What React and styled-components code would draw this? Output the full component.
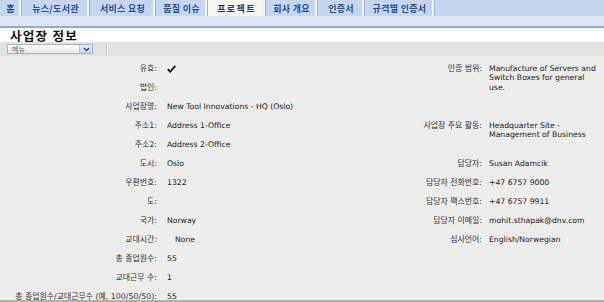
import React from "react";
import styled, { createGlobalStyle } from "styled-components";

const Global = createGlobalStyle`
  html, body { margin: 0; padding: 0; background: #ffffff; }
  body { width: 604px; height: 302px; overflow: hidden; font-family: "DejaVu Sans", "Noto Sans CJK KR", sans-serif; }
`;

const Page = styled.div`
  width: 604px;
  height: 302px;
  display: flex;
  flex-direction: column;
  overflow: hidden;
`;

const TabBar = styled.div`
  height: 16px;
  display: flex;
  background: #c6d6ef;
`;

const Tab = styled.div`
  display: flex;
  align-items: center;
  justify-content: center;
  width: ${(p) => p.$w}px;
  box-sizing: border-box;
  font-family: "Noto Sans CJK KR", sans-serif;
  font-weight: 700;
  font-size: 9px;
  letter-spacing: ${(p) => (p.$active ? "1.4px" : "0.3px")};
  color: ${(p) => (p.$active ? "#26375f" : "#2b4f93")};
  background: ${(p) => (p.$active ? "#f7f6f0" : "transparent")};
  border-right: 1px solid #9fb3d5;
  box-shadow: inset -2px 0 0 #eef3fb;
  white-space: nowrap;
`;

const SubBar = styled.div`
  height: 10px;
  background: #dbe5f4;
  border-bottom: 2px solid #94a9cc;
`;

const Title = styled.h1`
  margin: 0;
  height: 14px;
  padding: 0 0 0 10px;
  display: flex;
  align-items: center;
  font-family: "Noto Sans CJK KR", sans-serif;
  font-weight: 700;
  font-size: 12.5px;
  letter-spacing: 1.3px;
  color: #111;
`;

const Toolbar = styled.div`
  height: 14px;
  display: flex;
  align-items: center;
  padding-left: 7px;
  gap: 13px;
  background: #e3e3de;
`;

const Select = styled.div`
  width: 86px;
  height: 10px;
  box-sizing: border-box;
  display: flex;
  align-items: stretch;
  border: 1px solid #a8b4c8;
  background: linear-gradient(#fbfbfb, #e9e9e9);
`;

const SelectText = styled.span`
  flex: 1;
  font-family: "Noto Sans CJK KR", sans-serif;
  font-size: 7px;
  line-height: 8px;
  padding-left: 4px;
  color: #666;
`;

const SelectButton = styled.span`
  width: 12px;
  display: flex;
  align-items: center;
  justify-content: center;
  background: linear-gradient(#e4edfb, #c3d4f0);
  border-left: 1px solid #b6c5df;
`;

const Separator = styled.span`
  width: 1px;
  height: 12px;
  background: #c8c8c2;
  box-shadow: 1px 0 0 #f6f6f3;
`;

const Content = styled.div`
  height: 241px;
  box-sizing: content-box;
  padding-top: 3px;
  background: #ececea;
  border-bottom: 2px solid #b3b3a5;
  display: flex;
  overflow: hidden;
`;

const Column = styled.div`
  width: ${(p) => p.$w}px;
  display: flex;
  flex-direction: column;
  flex: none;
`;

const Row = styled.div`
  height: ${(p) => 19 * (p.$span || 1)}px;
  display: grid;
  grid-template-columns: ${(p) => p.$label}px 1fr;
  column-gap: ${(p) => p.$gap}px;
  flex: none;
`;

const Label = styled.div`
  display: flex;
  justify-content: flex-end;
  white-space: nowrap;
  padding-top: 4.5px;
  line-height: 10px;
  font-family: "DejaVu Sans", "Noto Sans CJK KR", sans-serif;
  font-size: 7.9px;
  color: #333;
`;

const Value = styled.div`
  padding-top: 4.5px;
  padding-left: ${(p) => p.$indent || 0}px;
  padding-right: 4px;
  line-height: 9.6px;
  font-family: "DejaVu Sans", sans-serif;
  font-size: 7.7px;
  color: #222;
`;

const Check = () => (
  <svg width="9" height="8" viewBox="0 0 9 8" style={{ display: "block", marginTop: 1 }}>
    <path d="M0.8 4.2 L3.2 6.8 L8.3 0.9" fill="none" stroke="#111" strokeWidth="1.7" />
  </svg>
);

const Chevron = () => (
  <svg width="7" height="5" viewBox="0 0 7 5">
    <path d="M1 1 L3.5 3.5 L6 1" fill="none" stroke="#27468a" strokeWidth="1.4" />
  </svg>
);

const tabs = [
  ["홈", 22],
  ["뉴스/도서관", 68],
  ["서비스 요청", 66],
  ["품질 이슈", 52],
  ["프로젝트", 58, true],
  ["회사 개요", 52],
  ["인증서", 47],
  ["규격별 인증서", 70],
];

const left = [
  ["유효:", <Check key="c" />],
  ["법인:", ""],
  ["사업장명:", "New Tool Innovations - HQ (Oslo)"],
  ["주소1:", "Address 1-Office"],
  ["주소2:", "Address 2-Office"],
  ["도시:", "Oslo"],
  ["우편번호:", "1322"],
  ["도:", ""],
  ["국가:", "Norway"],
  ["교대시간:", "None", 8],
  ["총 종업원수:", "55"],
  ["교대근무 수:", "1"],
  ["총 종업원수/교대근무수 (예, 100/50/50):", "55"],
];

const right = [
  ["인증 범위:", "Manufacture of Servers and Switch Boxes for general use.", 3],
  ["사업장 주요 활동:", "Headquarter Site - Management of Business", 2],
  ["담당자:", "Susan Adamcik", 1],
  ["담당자 전화번호:", "+47 6757 9000", 1],
  ["담당자 팩스번호:", "+47 6757 9911", 1],
  ["담당자 이메일:", "mohit.sthapak@dnv.com", 1],
  ["심사언어:", "English/Norwegian", 1],
];

export default function App() {
  return (
    <Page>
      <Global />
      <TabBar>
        {tabs.map(([t, w, a]) => (
          <Tab key={t} $w={w} $active={a}>
            {t}
          </Tab>
        ))}
      </TabBar>
      <SubBar />
      <Title>사업장 정보</Title>
      <Toolbar>
        <Select>
          <SelectText>메뉴</SelectText>
          <SelectButton>
            <Chevron />
          </SelectButton>
        </Select>
        <Separator />
      </Toolbar>
      <Content>
        <Column $w={330}>
          {left.map(([l, v, ind]) => (
            <Row key={l} $label={157} $gap={10}>
              <Label>{l}</Label>
              <Value $indent={ind}>{v}</Value>
            </Row>
          ))}
        </Column>
        <Column $w={274}>
          {right.map(([l, v, s]) => (
            <Row key={l} $span={s} $label={152} $gap={7}>
              <Label>{l}</Label>
              <Value>{v}</Value>
            </Row>
          ))}
        </Column>
      </Content>
    </Page>
  );
}
